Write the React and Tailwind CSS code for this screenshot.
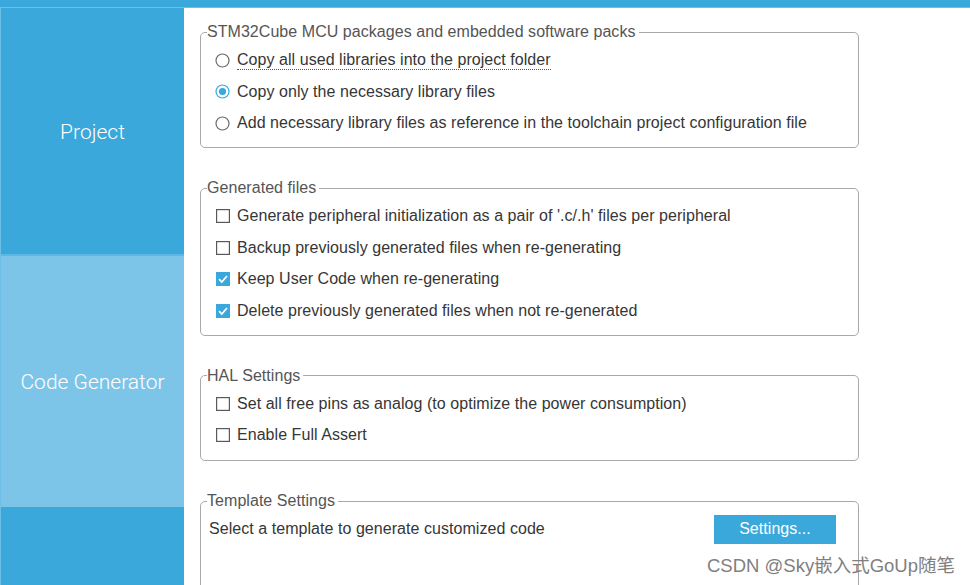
// App.jsx — STM32CubeMX "Code Generator" settings page
const BLUE = "bg-[#3aa8da]";

function Radio({ checked }) {
  return (
    <svg width="15" height="15" viewBox="0 0 15 15" className="shrink-0 -ml-[1px]">
      <circle cx="7.5" cy="7.5" r="6.5" fill="#fff" stroke={checked ? "#3aa8da" : "#6a6a6a"} strokeWidth="1.2" />
      {checked && <circle cx="7.5" cy="7.5" r="3.6" fill="#3aa8da" />}
    </svg>
  );
}

function Check({ checked }) {
  if (checked) {
    return (
      <svg width="14" height="14" viewBox="0 0 14 14" className="shrink-0">
        <rect x="0" y="0" width="14" height="14" fill="#3aa8da" />
        <path d="M3 7.2 L5.8 10 L11 4" fill="none" stroke="#fff" strokeWidth="1.8" />
      </svg>
    );
  }
  return (
    <svg width="14" height="14" viewBox="0 0 14 14" className="shrink-0">
      <rect x="0.6" y="0.6" width="12.8" height="12.8" fill="#fff" stroke="#5a5a5a" strokeWidth="1.2" />
    </svg>
  );
}

function Row({ children, control, dotted }) {
  return (
    <div className="flex items-center gap-[7px] h-[31.5px]">
      {control}
      <span className={dotted ? "border-b border-dotted border-[#555] leading-[19px]" : ""}>{children}</span>
    </div>
  );
}

function Group({ title, children, className = "" }) {
  return (
    <fieldset className={`w-[659px] border border-[#a9a9a9] rounded-[5px] pl-[15px] pr-[22px] pt-[2.5px] ${className}`}>
      <legend className="-ml-[9px] pr-[3px] leading-[20px] text-[#555]">{title}</legend>
      {children}
    </fieldset>
  );
}

export default function App() {
  return (
    <div
      className="relative w-[970px] h-[585px] overflow-hidden bg-white flex flex-col text-[16px] tracking-[0.05px] text-[#363636]"
      style={{ fontFamily: "'Liberation Sans', Arial, sans-serif" }}
    >
      <div className={`h-[8px] shrink-0 ${BLUE} border-b border-[#6cc0e6]`} />
      <div className="flex flex-1 min-h-0">
        <aside
          className={`w-[184px] shrink-0 flex flex-col ${BLUE} border-l border-[#6cc0e6] text-white font-light text-[21px] tracking-normal`}
          style={{ fontFamily: "Roboto, 'Liberation Sans', sans-serif" }}
        >
          <div className="h-[246px] flex items-center justify-center pt-[4px]">Project</div>
          <div className="h-[2px] bg-[#5cb9e4]" />
          <div className="h-[251px] bg-[#7dc5e8] flex items-center justify-center pt-[2px]">Code Generator</div>
          <div className="flex-1" />
        </aside>
        <main className="flex-1 pl-[16px] pt-[14px] flex flex-col gap-[30px]">
          <Group title="STM32Cube MCU packages and embedded software packs" className="pb-[8px]">
            <Row control={<Radio />} dotted>Copy all used libraries into the project folder</Row>
            <Row control={<Radio checked />}>Copy only the necessary library files</Row>
            <Row control={<Radio />}>Add necessary library files as reference in the toolchain project configuration file</Row>
          </Group>
          <Group title="Generated files" className="pb-[8px]">
            <Row control={<Check />}>Generate peripheral initialization as a pair of '.c/.h' files per peripheral</Row>
            <Row control={<Check />}>Backup previously generated files when re-generating</Row>
            <Row control={<Check checked />}>Keep User Code when re-generating</Row>
            <Row control={<Check checked />}>Delete previously generated files when not re-generated</Row>
          </Group>
          <Group title="HAL Settings" className="pb-[9px]">
            <Row control={<Check />}>Set all free pins as analog (to optimize the power consumption)</Row>
            <Row control={<Check />}>Enable Full Assert</Row>
          </Group>
          <Group title="Template Settings" className="pb-[60px]">
            <div className="flex items-center justify-between h-[31px] -ml-[7px]">
              <span>Select a template to generate customized code</span>
              <button className={`w-[122px] h-[29px] ${BLUE} text-white`}>Settings...</button>
            </div>
          </Group>
        </main>
      </div>
      <div
        className="absolute right-[15px] bottom-[10px] text-[18.5px] text-[#808080] leading-none tracking-normal"
        style={{ fontFamily: "'Liberation Sans', 'Noto Sans CJK SC', sans-serif" }}
      >
        CSDN @Sky嵌入式GoUp随笔
      </div>
    </div>
  );
}
